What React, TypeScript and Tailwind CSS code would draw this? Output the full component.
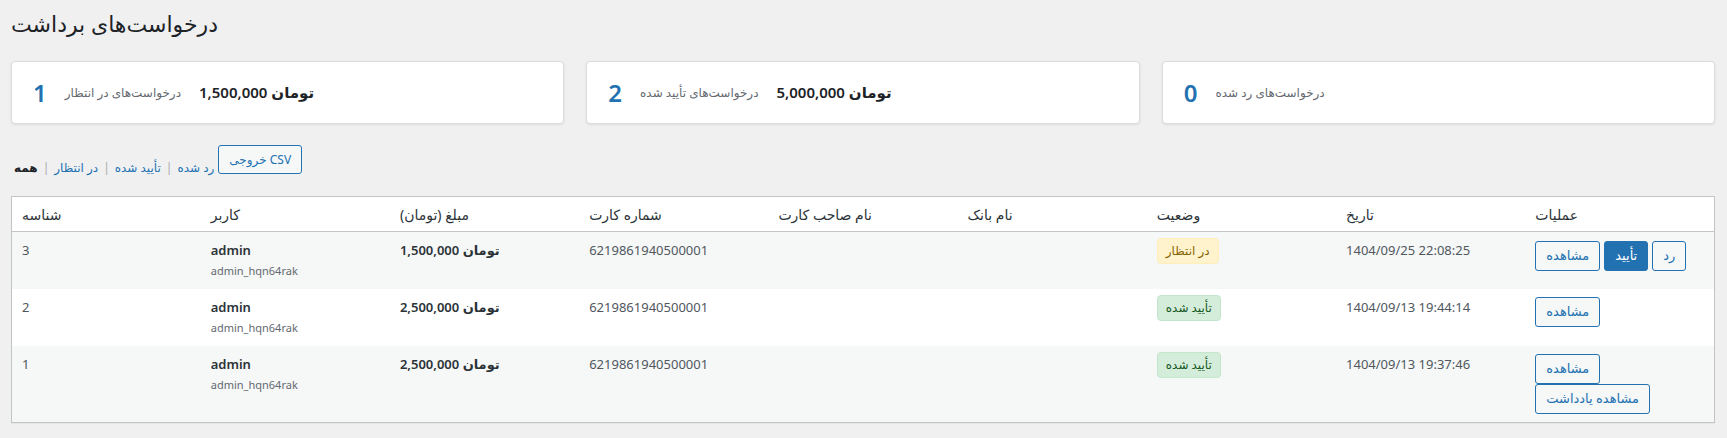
import React from "react";

const FONT = { fontFamily: '"Noto Sans", "DejaVu Sans", sans-serif' };

function Card({ num, label, amount }: { num: string; label: string; amount?: string }) {
  return (
    <div className="flex-1 h-[63px] bg-white border border-[#dcdcde] rounded-[4px] shadow-[0_1px_3px_rgba(0,0,0,0.08)] flex items-center pl-[21px] gap-[18px]">
      <span className="text-[24px] leading-none font-semibold text-[#2271b1]">{num}</span>
      <span className="text-[12px] text-[#646970]">{label}</span>
      {amount && <span className="text-[15px] font-semibold text-[#1d2327]">{amount}</span>}
    </div>
  );
}

function Btn({ children, primary }: { children: React.ReactNode; primary?: boolean }) {
  return (
    <button
      className={
        primary
          ? "h-[30px] px-[10px] text-[13px] rounded-[3px] border border-[#2271b1] bg-[#2271b1] text-white whitespace-nowrap"
          : "h-[30px] px-[10px] text-[13px] rounded-[3px] border border-[#2271b1] bg-[#f6f7f7] text-[#2271b1] whitespace-nowrap"
      }
    >
      {children}
    </button>
  );
}

function Badge({ kind }: { kind: "pending" | "ok" }) {
  return kind === "pending" ? (
    <span className="inline-block h-[26px] leading-[24px] px-[8px] text-[12px] rounded-[4px] border border-[#ffeeba] bg-[#fff3cd] text-[#856404]">
      در انتظار
    </span>
  ) : (
    <span className="inline-block h-[26px] leading-[24px] px-[8px] text-[12px] rounded-[4px] border border-[#c3e6cb] bg-[#d4edda] text-[#155724]">
      تأیید شده
    </span>
  );
}

const rows = [
  { id: "3", amount: "1,500,000 تومان", status: "pending" as const, date: "1404/09/25 22:08:25", ops: "pending" },
  { id: "2", amount: "2,500,000 تومان", status: "ok" as const, date: "1404/09/13 19:44:14", ops: "view" },
  { id: "1", amount: "2,500,000 تومان", status: "ok" as const, date: "1404/09/13 19:37:46", ops: "note" },
];

export default function App() {
  const headers = ["شناسه", "کاربر", "مبلغ (تومان)", "شماره کارت", "نام صاحب کارت", "نام بانک", "وضعیت", "تاریخ", "عملیات"];
  return (
    <div className="min-h-screen bg-[#f0f0f1] text-[13px] text-[#3c434a]" style={FONT}>
      <div className="pl-[11px] pr-[12px]">
        <h1 className="text-[22px] font-normal leading-[30px] pt-[8px] pb-[4px] text-[#1d2327]">درخواست‌های برداشت</h1>
        <div className="mt-[19px] flex gap-[22px]">
          <Card num="1" label="درخواست‌های در انتظار" amount="1,500,000 تومان" />
          <Card num="2" label="درخواست‌های تأیید شده" amount="5,000,000 تومان" />
          <Card num="0" label="درخواست‌های رد شده" />
        </div>
        <div className="mt-[21px] flex items-start h-[51px]">
          <div className="mt-[10px] leading-[26px] pl-[3px] text-[12px] flex gap-[5px]">
            <span className="font-bold text-[#1d2327]">همه</span>
            <span className="text-[#a7aaad]">|</span>
            <span className="text-[#2271b1]">در انتظار</span>
            <span className="text-[#a7aaad]">|</span>
            <span className="text-[#2271b1]">تأیید شده</span>
            <span className="text-[#a7aaad]">|</span>
            <span className="text-[#2271b1]">رد شده</span>
          </div>
          <button className="ml-[4px] h-[29px] px-[10px] text-[12px] rounded-[3px] border border-[#2271b1] bg-[#f6f7f7] text-[#2271b1]">
            خروجی CSV
          </button>
        </div>
        <table className="w-full table-fixed border-collapse border border-[#c3c4c7] bg-white shadow-[0_1px_1px_rgba(0,0,0,0.04)]">
          <thead>
            <tr className="border-b border-[#c3c4c7]">
              {headers.map((h) => (
                <th key={h} className="text-left font-normal text-[14px] text-[#2c3338] h-[35px] px-[10px] py-0 align-middle">
                  {h}
                </th>
              ))}
            </tr>
          </thead>
          <tbody>
            {rows.map((r, i) => (
              <tr key={r.id} className={i % 2 === 0 ? "bg-[#f6f7f7]" : "bg-white"}>
                <td className="align-top px-[10px] pt-[8px] pb-[8px] text-[#50575e] leading-[20px]">{r.id}</td>
                <td className="align-top px-[10px] pt-[8px] pb-[8px]">
                  <div className="text-[13px] font-semibold text-[#2c3338] leading-[21px]">admin</div>
                  <div className="text-[11px] text-[#646970] leading-[20px]">admin_hqn64rak</div>
                </td>
                <td className="align-top px-[10px] pt-[8px] pb-[8px] font-semibold text-[#2c3338] leading-[20px]">{r.amount}</td>
                <td className="align-top px-[10px] pt-[8px] pb-[8px] text-[#50575e] leading-[20px]">6219861940500001</td>
                <td className="align-top px-[10px] pt-[8px] pb-[8px]"></td>
                <td className="align-top px-[10px] pt-[8px] pb-[8px]"></td>
                <td className="align-top px-[10px] pt-[6px] pb-[8px]">
                  <Badge kind={r.status} />
                </td>
                <td className="align-top px-[10px] pt-[8px] pb-[8px] text-[#50575e] leading-[20px]">{r.date}</td>
                <td className="align-top px-[10px] pt-[8px] pb-[8px]">
                  {r.ops === "pending" && (
                    <div className="flex gap-[4px] mt-[1px]">
                      <Btn>مشاهده</Btn>
                      <Btn primary>تأیید</Btn>
                      <Btn>رد</Btn>
                    </div>
                  )}
                  {r.ops === "view" && (
                    <div className="flex">
                      <Btn>مشاهده</Btn>
                    </div>
                  )}
                  {r.ops === "note" && (
                    <div className="flex flex-col items-start">
                      <Btn>مشاهده</Btn>
                      <Btn>مشاهده یادداشت</Btn>
                    </div>
                  )}
                </td>
              </tr>
            ))}
          </tbody>
        </table>
      </div>
    </div>
  );
}
